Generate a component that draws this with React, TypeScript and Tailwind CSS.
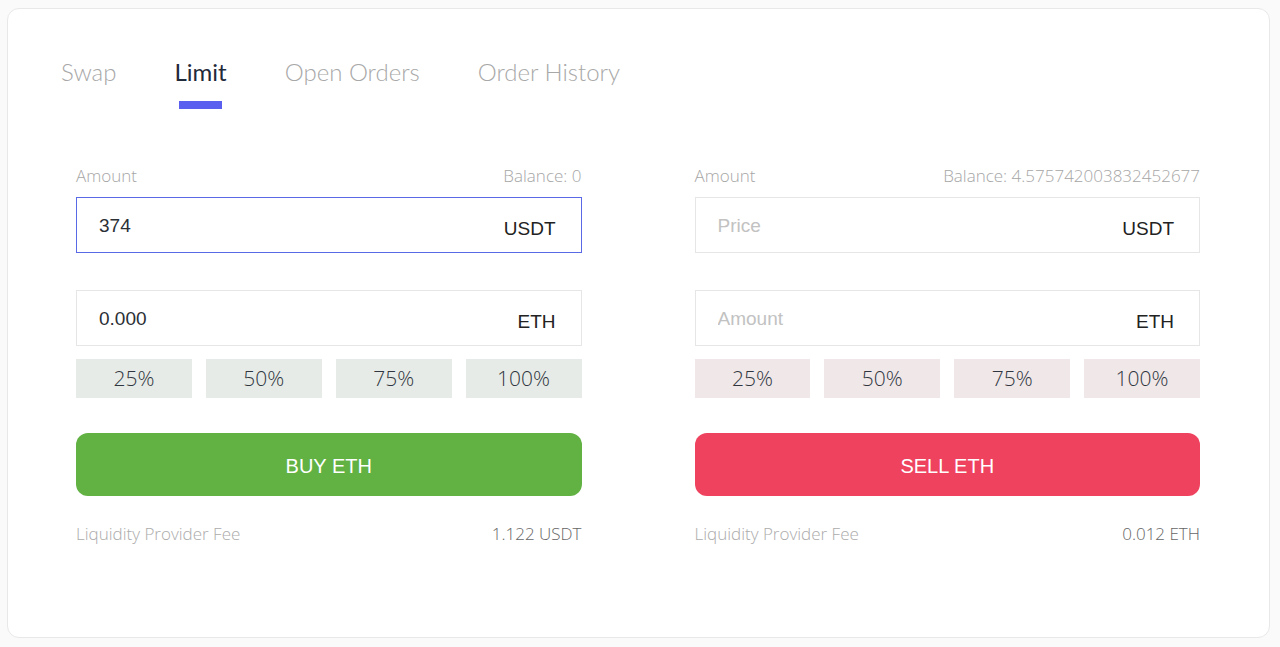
import { useState } from "react";

const percents = ["25%", "50%", "75%", "100%"];

function Field({
  value,
  placeholder,
  unit,
  active,
  onChange,
}: {
  value: string;
  placeholder?: string;
  unit: string;
  active?: boolean;
  onChange: (v: string) => void;
}) {
  return (
    <label
      className={
        "flex h-[56px] items-center border bg-white pl-[22px] pr-[25px] " +
        (active ? "border-[#5a6ae6]" : "border-[#e6e6e6]")
      }
    >
      <input
        value={value}
        placeholder={placeholder}
        onChange={(e) => onChange(e.target.value)}
        className="min-w-0 grow bg-transparent pt-[2px] font-['Liberation_Sans',sans-serif] text-[19px] text-[#2b2f36] outline-none placeholder:text-[#c2c2c2]"
      />
      <span className="pt-[8px] font-['Liberation_Sans',sans-serif] text-[19px] text-[#222]">
        {unit}
      </span>
    </label>
  );
}

function OrderPanel({ side }: { side: "buy" | "sell" }) {
  const isBuy = side === "buy";
  const [first, setFirst] = useState(isBuy ? "374" : "");
  const [second, setSecond] = useState(isBuy ? "0.000" : "");

  return (
    <div className="flex flex-col font-['Open_Sans',sans-serif] font-light">
      <div className="flex items-center justify-between text-[17px] leading-5 text-[#a6a6a6]">
        <span>Amount</span>
        <span>{isBuy ? "Balance: 0" : "Balance: 4.575742003832452677"}</span>
      </div>

      <div className="mt-[11px]">
        <Field
          value={first}
          placeholder="Price"
          unit="USDT"
          active={isBuy}
          onChange={setFirst}
        />
      </div>
      <div className="mt-[37px]">
        <Field
          value={second}
          placeholder="Amount"
          unit="ETH"
          onChange={setSecond}
        />
      </div>

      <div className="mt-[13px] grid grid-cols-4 gap-[14px]">
        {percents.map((p) => (
          <button
            key={p}
            className={
              "h-[39px] text-[21px] text-[#2f3640] " +
              (isBuy ? "bg-[#e7ebe7]" : "bg-[#f0e7e9]")
            }
          >
            {p}
          </button>
        ))}
      </div>

      <button
        className={
          "mt-[35px] h-[63px] rounded-xl pt-[2px] font-['Liberation_Sans',sans-serif] text-[20px] font-normal text-white " +
          (isBuy ? "bg-[#61b243]" : "bg-[#ef425f]")
        }
      >
        {isBuy ? "BUY ETH" : "SELL ETH"}
      </button>

      <div className="mt-[28px] flex items-center justify-between text-[17px] leading-5">
        <span className="text-[#ababab]">Liquidity Provider Fee</span>
        <span className="text-[#666666]">{isBuy ? "1.122 USDT" : "0.012 ETH"}</span>
      </div>
    </div>
  );
}

export default function App() {
  const [tab, setTab] = useState("Limit");
  const tabs = ["Swap", "Limit", "Open Orders", "Order History"];

  return (
    <div className="min-h-screen bg-[#fafafa] pl-[7px] pt-2 font-['Lato',sans-serif]">
      <div className="h-[630px] w-[1263px] rounded-xl border border-[#e8e8e8] bg-white">
        <div className="flex gap-[58px] pl-[53px] pt-[48px]">
          {tabs.map((t) => (
            <button
              key={t}
              onClick={() => setTab(t)}
              className="flex flex-col items-center"
            >
              <span
                className={
                  "text-[24px] leading-[30px] " +
                  (tab === t ? "font-normal text-[#1f2a3a]" : "font-light text-[#a8a8a8]")
                }
              >
                {t}
              </span>
              <span
                className={
                  "mt-[14px] h-2 w-[43px] " +
                  (tab === t ? "bg-[#5b5ff0]" : "bg-transparent")
                }
              />
            </button>
          ))}
        </div>

        <div className="mt-[57px] grid grid-cols-2 gap-[113px] pl-[68px] pr-[69px]">
          <OrderPanel side="buy" />
          <OrderPanel side="sell" />
        </div>
      </div>
    </div>
  );
}
